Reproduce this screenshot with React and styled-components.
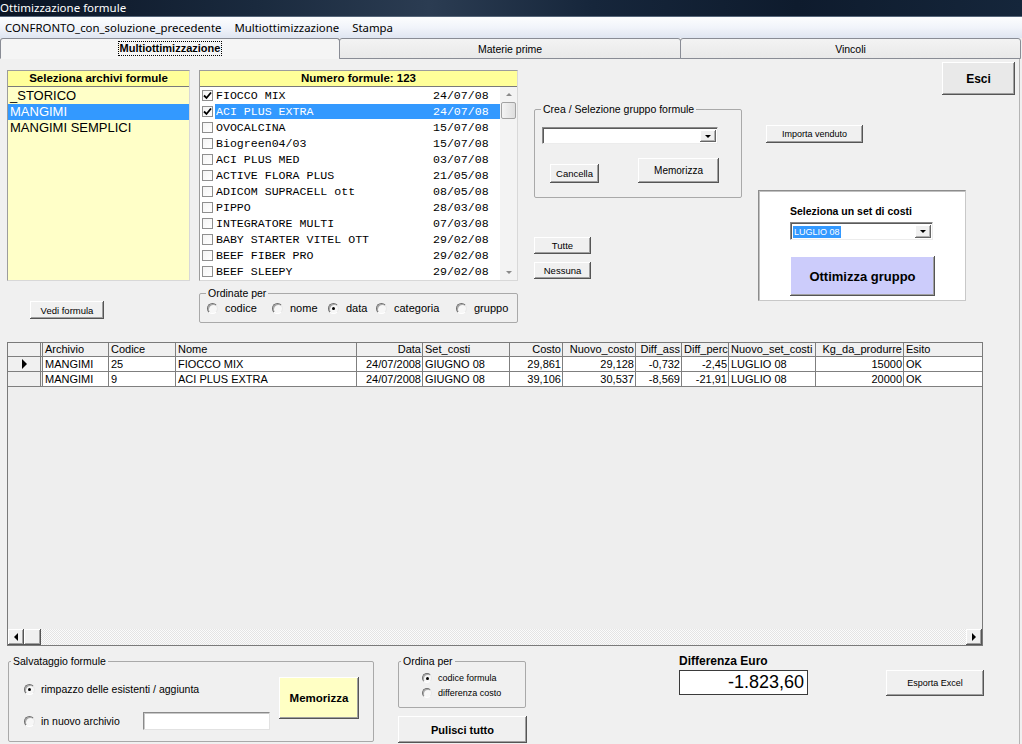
import React from 'react';
import styled, { createGlobalStyle } from 'styled-components';

const SANS = `"Liberation Sans", Arial, sans-serif`;
const UI = `"Noto Sans", "Liberation Sans", sans-serif`;
const MONO = `"Liberation Mono", "Courier New", monospace`;

const Global = createGlobalStyle`
  html, body { margin: 0; padding: 0; background: #f0f0f0; overflow: hidden; }
  #root { width: 1022px; height: 744px; }
  *, *::before, *::after { box-sizing: border-box; }
`;

const Window = styled.div`
  width: 1022px; height: 744px; overflow: hidden;
  display: flex; flex-direction: column;
  background: #f0f0f0; color: #000; font-family: ${SANS};
`;

const TitleBar = styled.div`
  flex: none; height: 17px; padding-left: 0;
  background: linear-gradient(90deg, #0a1424 0%, #1a2a3e 25%, #2b3c52 42%, #16263b 58%, #0e1b2d 78%, #15263b 100%);
  border-bottom: 1px solid #56667a;
  color: #fff; font: 11.5px/15px ${UI};
  white-space: nowrap;
`;

const MenuBar = styled.div`
  flex: none; height: 21px; display: flex; align-items: center; gap: 13px;
  padding-left: 5px;
  background: linear-gradient(#fcfdfe 0%, #f1f4fa 50%, #dfe5f1 100%);
  font: 11.4px ${UI}; white-space: nowrap;
`;

const MenuItem = styled.span``;

const TabStrip = styled.div`
  flex: none; height: 21px; display: flex; align-items: flex-end;
`;

const Tab = styled.div`
  flex: 0 0 ${p => p.$w}px; height: 21px;
  margin-left: ${p => (p.$first ? 0 : -1)}px;
  border: 1px solid #898c95;
  border-bottom: ${p => (p.$active ? '1px solid transparent' : '1px solid #898c95')};
  border-radius: 3px 3px 0 0;
  background: ${p => (p.$active ? '#f5f5f5' : 'linear-gradient(#f3f3f3, #e9e9e9)')};
  display: flex; align-items: center; justify-content: center;
  font: ${p => (p.$active ? 'bold 11px' : '10.5px')} ${SANS};
`;

const FocusLabel = styled.span`
  outline: 1px dotted #000; outline-offset: 0; padding: 0 1px; line-height: 13px;
`;

const TabPage = styled.div`
  flex: 1; width: 1020px; display: flex; flex-direction: column;
  border-right: 1px solid #b4b4b4;
`;

const TopArea = styled.div`
  flex: none; height: 283px; display: flex; align-items: flex-start;
`;

const Column = styled.div`
  flex: none; width: ${p => p.$w}px; margin-left: ${p => p.$ml || 0}px;
  display: flex; flex-direction: column; align-items: flex-start;
`;

const ListPanel = styled.div`
  width: ${p => p.$w}px; height: 211px; margin-top: 11px;
  display: flex; flex-direction: column;
  border: 1px solid #9c9c9c; border-right-color: #d8d8d8; border-bottom-color: #d8d8d8;
  background: ${p => p.$bg};
`;

const ListHeader = styled.div`
  flex: none; height: 16px; background: #ffff99; border-bottom: 1px solid #7a7a7a;
  text-align: center; font: bold 11.5px/15px ${SANS};
`;

const ArchiveBody = styled.div`
  flex: 1; padding-top: 1px;
`;

const ArchiveItem = styled.div`
  height: 16px; padding-left: 2px; font: 13px/16px ${SANS}; white-space: nowrap;
  background: ${p => (p.$sel ? '#3399ff' : 'transparent')};
  color: ${p => (p.$sel ? '#fff' : '#000')};
`;

const FormulaBody = styled.div`
  flex: 1; display: flex; background: #fff;
`;

const FormulaRows = styled.div`
  flex: 1;
`;

const FormulaRow = styled.div`
  height: 16px; display: flex; align-items: center; padding-left: 2px;
  font: 11.6px ${MONO}; white-space: pre;
`;

const CheckBox = styled.span`
  flex: none; width: 11px; height: 11px;
  border: 1px solid #8f8f8f; background: linear-gradient(135deg, #f4f4f4, #fff);
  display: flex; align-items: center; justify-content: center;
`;

const FormulaText = styled.div`
  flex: 1; height: 15px; margin-left: 2px; padding-left: 1px; display: flex; align-items: center;
  background: ${p => (p.$sel ? '#3399ff' : 'transparent')};
  color: ${p => (p.$sel ? '#fff' : '#000')};
`;

const FormulaName = styled.span`
  width: 217px; overflow: hidden;
`;

const VScroll = styled.div`
  flex: none; width: 17px; display: flex; flex-direction: column; background: #f3f3f3;
`;

const ScrollArrow = styled.div`
  flex: none; height: ${p => p.$h || 16}px; display: flex; align-items: center; justify-content: center;
`;

const ScrollThumb = styled.div`
  flex: none; height: 17px; margin: 0 1px;
  border: 1px solid #a2a2a2; border-radius: 2px;
  background: linear-gradient(90deg, #f4f4f4, #dedede);
`;

const ScrollTrack = styled.div`
  flex: 1;
`;

const Group = styled.fieldset`
  margin: ${p => p.$mt || 0}px 0 0 ${p => p.$ml || 0}px;
  padding: 0; min-width: 0;
  width: ${p => p.$w}px; height: ${p => p.$h}px;
  border: 1px solid #a9a9a9; border-radius: 2px;
  display: flex; flex-direction: column; align-items: flex-start;
`;

const Legend = styled.legend`
  margin-left: ${p => p.$lm || 6}px; padding: 0 2px;
  font: ${p => p.$fs || 10.5}px/12px ${SANS};
`;

const RadioRow = styled.div`
  display: grid; grid-template-columns: ${p => p.$cols};
  margin: ${p => p.$mt || 0}px 0 0 ${p => p.$ml || 0}px; align-items: center;
`;

const RadioOption = styled.label`
  display: flex; align-items: center; gap: ${p => p.$gap || 7}px;
  font: ${p => p.$fs || 11}px ${SANS}; white-space: nowrap;
  margin: ${p => p.$mt || 0}px 0 0 ${p => p.$ml || 0}px;
`;

const RadioCircle = styled.span`
  flex: none; width: ${p => p.$size || 11}px; height: ${p => p.$size || 11}px; border-radius: 50%;
  border: 1px solid; border-color: #6e6e6e #e8e8e8 #ffffff #6e6e6e;
  background: #f7f7f7;
  box-shadow: inset 1px 1px 0 #a8a8a8;
  display: flex; align-items: center; justify-content: center;
  &::after {
    content: ''; width: 3px; height: 3px; border-radius: 50%; background: #000;
    display: ${p => (p.$on ? 'block' : 'none')};
  }
`;

const Button = styled.div`
  flex: none; width: ${p => p.$w}px; height: ${p => p.$h}px;
  margin: ${p => p.$mt || 0}px 0 0 ${p => p.$ml || 0}px;
  background: ${p => p.$bg || '#f0f0f0'};
  box-shadow: inset -1px -1px 0 #555, inset 1px 1px 0 #fff, inset -2px -2px 0 #a0a0a0, inset 2px 2px 0 ${p => p.$bg || '#f0f0f0'};
  display: flex; align-items: center; justify-content: center;
  font: ${p => (p.$bold ? 'bold ' : '')}${p => p.$fs || 9.5}px ${SANS};
  white-space: nowrap;
  align-self: ${p => p.$self || 'auto'};
`;

const Combo = styled.div`
  flex: none; width: ${p => p.$w}px; height: ${p => p.$h}px;
  margin: ${p => p.$mt || 0}px 0 0 ${p => p.$ml || 0}px;
  display: flex; background: #fff;
  border: 1px solid; border-color: #8a8a8a #ececec #ececec #8a8a8a;
  box-shadow: inset 1px 1px 0 #5a5a5a;
  padding: 2px 1px 1px 2px;
`;

const ComboValue = styled.div`
  flex: 1; display: flex; align-items: center; font: 9px ${SANS};
`;

const ComboSel = styled.span`
  background: #3399ff; color: #fff; line-height: 12px; padding: 0 1px;
`;

const ComboButton = styled.div`
  flex: none; width: 16px; background: #f0f0f0;
  box-shadow: inset -1px -1px 0 #666, inset 1px 1px 0 #fff, inset -2px -2px 0 #b0b0b0;
  display: flex; align-items: center; justify-content: center;
`;

const ButtonRow = styled.div`
  display: flex; align-items: flex-end; margin-top: ${p => p.$mt || 0}px;
`;

const CostPanel = styled.div`
  width: 208px; height: 111px; margin-top: 47px;
  background: #fff;
  border: 1px solid #8c8c8c; border-right-color: #c8c8c8; border-bottom-color: #c8c8c8;
  box-shadow: inset 1px 1px 0 #c0c0c0;
  padding: 14px 0 0 31px;
  display: flex; flex-direction: column; align-items: flex-start;
`;

const CostLabel = styled.div`
  font: bold 10.5px/13px ${SANS};
`;

const GridBox = styled.div`
  flex: none; width: 976px; height: 304px; margin-left: 7px;
  border: 1px solid #7a7a7a; background: #eeeeee;
  display: flex; flex-direction: column;
`;

const COLS = '35px 66px 67px 181px 66px 87px 53px 73px 46px 47px 87px 88px 1fr';

const GridRow = styled.div`
  flex: none; display: grid; grid-template-columns: ${COLS}; height: ${p => p.$h}px;
`;

const Cell = styled.div`
  border-right: 1px solid #7f7f7f; border-bottom: 1px solid #7f7f7f;
  background: ${p => (p.$head ? '#f0f0f0' : '#fff')};
  text-align: ${p => (p.$right ? 'right' : 'left')};
  padding: 0 1px 0 2px; font: 11px/${p => (p.$head ? 13 : 14)}px ${SANS};
  white-space: nowrap; overflow: hidden;
  &:last-child { border-right: none; }
`;

const RowHeadCell = styled.div`
  border-right: 3px double #7f7f7f; border-bottom: 1px solid #7f7f7f;
  background: #f0f0f0;
  display: flex; align-items: center; justify-content: center;
`;

const GridFill = styled.div`
  flex: 1;
`;

const HScroll = styled.div`
  flex: none; height: 16px; display: flex;
  background: repeating-conic-gradient(#e4e4e4 0 25%, #fbfbfb 0 50%) 0 0 / 2px 2px;
`;

const ScrollBtn = styled.div`
  flex: none; width: ${p => p.$w || 16}px; height: 16px; background: #f0f0f0;
  box-shadow: inset -1px -1px 0 #555, inset 1px 1px 0 #fff, inset -2px -2px 0 #a0a0a0;
  display: flex; align-items: center; justify-content: center;
`;

const BottomArea = styled.div`
  flex: 1; display: flex; align-items: flex-start;
`;

const SaveContent = styled.div`
  display: flex; align-items: flex-start; padding-left: 15px;
`;

const SaveOptions = styled.div`
  width: 255px; display: flex; flex-direction: column; padding-top: 16px;
`;

const SaveRow = styled.div`
  display: grid; grid-template-columns: 119px auto; align-items: start;
  margin-top: 20px;
`;

const TextField = styled.div`
  width: ${p => p.$w}px; height: ${p => p.$h}px; margin-top: ${p => p.$mt || 0}px;
  background: #fff;
  border: 1px solid; border-color: #8a8a8a #e2e2e2 #e2e2e2 #8a8a8a;
  box-shadow: inset 1px 1px 0 #c8c8c8;
`;

const SortColumn = styled.div`
  display: flex; flex-direction: column; margin-left: 24px;
`;

const DiffBlock = styled.div`
  display: flex; flex-direction: column; margin: 9px 0 0 152px;
`;

const DiffLabel = styled.div`
  font: bold 12px/13px ${SANS}; margin-bottom: 2px;
`;

const DiffBox = styled.div`
  width: 129px; height: 25px; background: #fff; border: 1px solid #3a3a3a;
  font: 18px/23px ${SANS}; text-align: right; padding-right: 3px;
`;

const Arrow = ({ dir = 'down', color = '#000', size = 4 }) => {
  const s = size;
  const pts = {
    down: `0,0 ${2 * s},0 ${s},${s}`,
    up: `0,${s} ${2 * s},${s} ${s},0`,
    left: `${s},0 ${s},${2 * s} 0,${s}`,
    right: `0,0 0,${2 * s} ${s},${s}`,
  }[dir];
  const w = dir === 'left' || dir === 'right' ? s : 2 * s;
  const h = dir === 'left' || dir === 'right' ? 2 * s : s;
  return (
    <svg width={w} height={h} viewBox={`0 0 ${w} ${h}`}>
      <polygon points={pts} fill={color} />
    </svg>
  );
};

const CheckMark = () => (
  <svg width="9" height="9" viewBox="0 0 9 9">
    <path d="M1 4.5 L3.5 7 L8 1.5" stroke="#000" strokeWidth="1.8" fill="none" />
  </svg>
);

const archives = [
  { name: '_STORICO' },
  { name: 'MANGIMI', sel: true },
  { name: 'MANGIMI SEMPLICI' },
];

const formulas = [
  ['FIOCCO MIX', '24/07/08', true],
  ['ACI PLUS EXTRA', '24/07/08', true, true],
  ['OVOCALCINA', '15/07/08'],
  ['Biogreen04/03', '15/07/08'],
  ['ACI PLUS MED', '03/07/08'],
  ['ACTIVE FLORA PLUS', '21/05/08'],
  ['ADICOM SUPRACELL ott', '08/05/08'],
  ['PIPPO', '28/03/08'],
  ['INTEGRATORE MULTI', '07/03/08'],
  ['BABY STARTER VITEL OTT', '29/02/08'],
  ['BEEF FIBER PRO', '29/02/08'],
  ['BEEF SLEEPY', '29/02/08'],
];

const columns = [
  ['Archivio', false], ['Codice', false], ['Nome', false], ['Data', true],
  ['Set_costi', false], ['Costo', true], ['Nuovo_costo', true], ['Diff_ass', true],
  ['Diff_perc', true], ['Nuovo_set_costi', false], ['Kg_da_produrre', true], ['Esito', false],
];

const rows = [
  ['MANGIMI', '25', 'FIOCCO MIX', '24/07/2008', 'GIUGNO 08', '29,861', '29,128', '-0,732', '-2,45', 'LUGLIO 08', '15000', 'OK'],
  ['MANGIMI', '9', 'ACI PLUS EXTRA', '24/07/2008', 'GIUGNO 08', '39,106', '30,537', '-8,569', '-21,91', 'LUGLIO 08', '20000', 'OK'],
];

const sortOptions = [
  ['codice', false], ['nome', false], ['data', true], ['categoria', false], ['gruppo', false],
];

export default function App() {
  return (
    <>
      <Global />
      <Window>
        <TitleBar>Ottimizzazione formule</TitleBar>
        <MenuBar>
          <MenuItem>CONFRONTO_con_soluzione_precedente</MenuItem>
          <MenuItem>Multiottimizzazione</MenuItem>
          <MenuItem>Stampa</MenuItem>
        </MenuBar>
        <TabStrip>
          <Tab $w={340} $first $active><FocusLabel>Multiottimizzazione</FocusLabel></Tab>
          <Tab $w={342}>Materie prime</Tab>
          <Tab $w={341}>Vincoli</Tab>
        </TabStrip>
        <TabPage>
          <TopArea>
            <Column $w={183} $ml={7}>
              <ListPanel $w={183} $bg="#ffffc8">
                <ListHeader>Seleziona archivi formule</ListHeader>
                <ArchiveBody>
                  {archives.map(a => (
                    <ArchiveItem key={a.name} $sel={a.sel}>{a.name}</ArchiveItem>
                  ))}
                </ArchiveBody>
              </ListPanel>
              <Button $w={74} $h={18} $mt={20} $ml={23} $fs={9.5}>Vedi formula</Button>
            </Column>

            <Column $w={319} $ml={9}>
              <ListPanel $w={319} $bg="#fff">
                <ListHeader>Numero formule: 123</ListHeader>
                <FormulaBody>
                  <FormulaRows>
                    {formulas.map(([name, date, checked, sel]) => (
                      <FormulaRow key={name}>
                        <CheckBox>{checked && <CheckMark />}</CheckBox>
                        <FormulaText $sel={sel}>
                          <FormulaName>{name}</FormulaName>
                          <span>{date}</span>
                        </FormulaText>
                      </FormulaRow>
                    ))}
                  </FormulaRows>
                  <VScroll>
                    <ScrollArrow $h={15}><Arrow dir="up" color="#8a8a8a" size={3} /></ScrollArrow>
                    <ScrollThumb />
                    <ScrollTrack />
                    <ScrollArrow $h={16}><Arrow dir="down" color="#8a8a8a" size={3} /></ScrollArrow>
                  </VScroll>
                </FormulaBody>
              </ListPanel>
              <Group $w={319} $h={36} $mt={6}>
                <Legend $lm={6}>Ordinate per</Legend>
                <RadioRow $cols="65px 56px 48px 80px auto" $ml={7} $mt={3}>
                  {sortOptions.map(([label, on]) => (
                    <RadioOption key={label}>
                      <RadioCircle $on={on} />
                      {label}
                    </RadioOption>
                  ))}
                </RadioRow>
              </Group>
            </Column>

            <Column $w={208} $ml={16}>
              <Group $w={208} $h={95} $mt={44}>
                <Legend $lm={6} $fs={10.5}>Crea / Selezione gruppo formule</Legend>
                <Combo $w={176} $h={17} $mt={12} $ml={7}>
                  <ComboValue />
                  <ComboButton><Arrow dir="down" size={3} /></ComboButton>
                </Combo>
                <ButtonRow $mt={14}>
                  <Button $w={49} $h={19} $ml={15} $fs={9.5}>Cancella</Button>
                  <Button $w={81} $h={25} $ml={39} $fs={10}>Memorizza</Button>
                </ButtonRow>
              </Group>
              <Button $w={57} $h={17} $mt={39} $fs={9.5}>Tutte</Button>
              <Button $w={57} $h={17} $mt={8} $fs={9.5}>Nessuna</Button>
            </Column>

            <Column $w={257} $ml={16}>
              <Button $w={73} $h={33} $mt={3} $bold $fs={12} $bg="#e9e9e9" $self="flex-end">Esci</Button>
              <Button $w={97} $h={18} $mt={30} $ml={8} $fs={9}>Importa venduto</Button>
              <CostPanel>
                <CostLabel>Seleziona un set di costi</CostLabel>
                <Combo $w={143} $h={18} $mt={4}>
                  <ComboValue><ComboSel>LUGLIO 08</ComboSel></ComboValue>
                  <ComboButton><Arrow dir="down" size={3} /></ComboButton>
                </Combo>
                <Button $w={145} $h={40} $mt={16} $bold $fs={13} $bg="#ccccfb">Ottimizza gruppo</Button>
              </CostPanel>
            </Column>
          </TopArea>

          <GridBox>
            <GridRow $h={14}>
              <RowHeadCell />
              {columns.map(([label, right]) => (
                <Cell key={label} $head $right={right}>{label}</Cell>
              ))}
            </GridRow>
            {rows.map((r, i) => (
              <GridRow key={i} $h={15}>
                <RowHeadCell>{i === 0 && <Arrow dir="right" size={5} />}</RowHeadCell>
                {r.map((v, j) => (
                  <Cell key={j} $right={columns[j][1]}>{v}</Cell>
                ))}
              </GridRow>
            ))}
            <GridFill />
            <HScroll>
              <ScrollBtn><Arrow dir="left" size={4} /></ScrollBtn>
              <ScrollBtn $w={17} />
              <ScrollTrack />
              <ScrollBtn><Arrow dir="right" size={4} /></ScrollBtn>
            </HScroll>
          </GridBox>

          <BottomArea>
            <Group $w={366} $h={87} $mt={9} $ml={8}>
              <Legend $lm={2}>Salvataggio formule</Legend>
              <SaveContent>
                <SaveOptions>
                  <RadioOption $gap={6} $fs={10.5}>
                    <RadioCircle $on />
                    rimpazzo delle esistenti / aggiunta
                  </RadioOption>
                  <SaveRow>
                    <RadioOption $gap={6} $fs={10.5}>
                      <RadioCircle />
                      in nuovo archivio
                    </RadioOption>
                    <TextField $w={127} $h={18} $mt={-3} />
                  </SaveRow>
                </SaveOptions>
                <Button $w={80} $h={42} $mt={10} $bold $fs={11.5} $bg="#ffffc4">Memorizza</Button>
              </SaveContent>
            </Group>

            <SortColumn>
              <Group $w={128} $h={53} $mt={9}>
                <Legend $lm={2}>Ordina per</Legend>
                <RadioOption $gap={6} $fs={9} $ml={23} $mt={6}>
                  <RadioCircle $on $size={10} />
                  codice formula
                </RadioOption>
                <RadioOption $gap={6} $fs={9} $ml={23} $mt={5}>
                  <RadioCircle $size={10} />
                  differenza costo
                </RadioOption>
              </Group>
              <Button $w={129} $h={27} $mt={8} $bold $fs={11}>Pulisci tutto</Button>
            </SortColumn>

            <DiffBlock>
              <DiffLabel>Differenza Euro</DiffLabel>
              <DiffBox>-1.823,60</DiffBox>
            </DiffBlock>

            <Button $w={98} $h={26} $mt={24} $ml={78} $fs={9}>Esporta Excel</Button>
          </BottomArea>
        </TabPage>
      </Window>
    </>
  );
}
